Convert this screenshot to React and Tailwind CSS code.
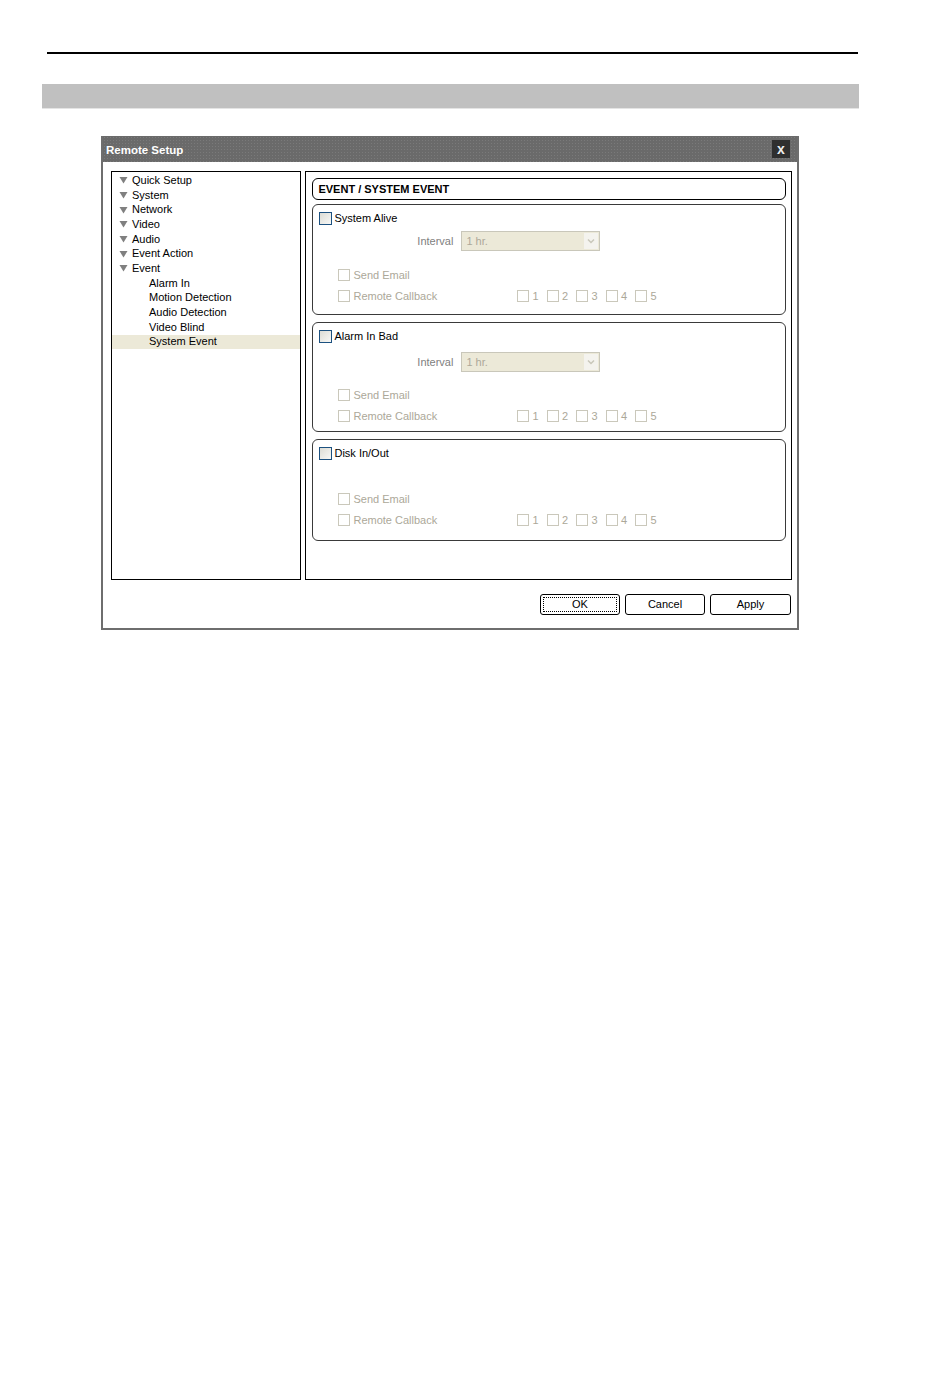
const font = "font-['Tahoma','Liberation_Sans',sans-serif]";

const treeItems = [
  { label: "Quick Setup", arrow: true },
  { label: "System", arrow: true },
  { label: "Network", arrow: true },
  { label: "Video", arrow: true },
  { label: "Audio", arrow: true },
  { label: "Event Action", arrow: true },
  { label: "Event", arrow: true },
  { label: "Alarm In" },
  { label: "Motion Detection" },
  { label: "Audio Detection" },
  { label: "Video Blind" },
  { label: "System Event", selected: true },
];

function Tri() {
  return (
    <svg width="9" height="8" viewBox="0 0 9 8" className="shrink-0">
      <path d="M0.5 1 L8.5 1 L4.5 7.5 Z" fill="#808080" />
    </svg>
  );
}

function Box({ active }) {
  return (
    <span
      className={
        active
          ? "inline-block h-[13px] w-[13px] shrink-0 border border-[#1c5180] bg-gradient-to-br from-[#dcdcd5] to-[#f8f8f6]"
          : "inline-block h-[12px] w-[12px] shrink-0 border border-[#cac8bb] bg-white"
      }
    />
  );
}

function DisabledCheck({ label }) {
  return (
    <div className="flex h-[14px] items-center gap-[3px] text-[#aca899]">
      <Box />
      <span>{label}</span>
    </div>
  );
}

function Interval() {
  return (
    <div className="flex items-center">
      <span className="w-[142px] pr-[8px] text-right text-[#808080]">Interval</span>
      <div className="flex h-[20px] w-[139px] items-center border border-[#c9c7ba] bg-[#ece9d8]">
        <span className="flex-1 pl-[4px] text-[#aca899]">1 hr.</span>
        <span className="mr-[1px] flex h-[16px] w-[14px] items-center justify-center bg-[#f4f3ee]">
          <svg width="8" height="6" viewBox="0 0 8 6">
            <path d="M1 1.5 L4 4.5 L7 1.5" stroke="#c9c7ba" strokeWidth="1.5" fill="none" />
          </svg>
        </span>
      </div>
    </div>
  );
}

function Callback() {
  return (
    <div className="flex items-center">
      <div className="w-[179px]">
        <DisabledCheck label="Remote Callback" />
      </div>
      <div className="flex items-center text-[#aca899]">
        {[1, 2, 3, 4, 5].map((n) => (
          <div key={n} className="flex w-[29.5px] items-center gap-[3px]">
            <Box />
            <span>{n}</span>
          </div>
        ))}
      </div>
    </div>
  );
}

function Group({ title, intervalTop, height, gapTop, top }) {
  return (
    <div
      className="flex flex-col rounded-[6px] border border-[#3a3a3a] pl-[6px]"
      style={{ height, marginTop: top }}
    >
      <div className="mt-[6px] flex h-[14px] items-center gap-[2px] text-black">
        <Box active />
        <span>{title}</span>
      </div>
      {intervalTop ? (
        <div style={{ marginTop: intervalTop }}>
          <Interval />
        </div>
      ) : null}
      <div className="flex flex-col gap-[7px] pl-[19px]" style={{ marginTop: gapTop }}>
        <DisabledCheck label="Send Email" />
        <Callback />
      </div>
    </div>
  );
}

export default function App() {
  return (
    <div className={`${font} relative h-[1388px] w-[950px] bg-white text-[11px] leading-none`}>
      <div className="pt-[52px]">
        <div className="ml-[47px] h-[2px] w-[811px] bg-black" />
      </div>
      <div className="ml-[42px] mt-[30px] h-[25px] w-[817px] border-b border-[#e4e4e4] bg-[#c0c0c0]" />

      <div className="ml-[101px] mt-[27px] flex h-[494px] w-[698px] flex-col border-2 border-t-0 border-[#6e6e6e] bg-white">
        <div className="flex h-[26px] items-center justify-between bg-[#6a6a6a] bg-[radial-gradient(#7a7a7a_0.8px,transparent_0.8px)] bg-[length:3px_3px] pl-[3px] pr-[7px] pt-[3px]">
          <span className="text-[11.5px] font-bold text-white">Remote Setup</span>
          <span className="-mt-[3px] flex h-[18px] w-[18px] items-center justify-center bg-[#2f2f2f] text-[14px] font-bold text-[#eeeeee]">
            x
          </span>
        </div>

        <div className="flex gap-[4px] pl-[8px] pr-[5px] pt-[9px]">
          <div className="h-[409px] w-[191px] border border-black pt-[1px]">
            {treeItems.map((it) => (
              <div
                key={it.label}
                className={`flex h-[14.7px] items-center ${it.selected ? "bg-[#ece9d8]" : ""} ${
                  it.arrow ? "pl-[7px]" : "pl-[37px]"
                }`}
              >
                {it.arrow ? <Tri /> : null}
                <span className={it.arrow ? "pl-[4px]" : ""}>{it.label}</span>
              </div>
            ))}
          </div>

          <div className="flex h-[409px] w-[488px] flex-col border border-black pl-[6px] pr-[5px] pt-[6px]">
            <div className="flex h-[22px] shrink-0 items-center rounded-[6px] border border-black pl-[5px] font-bold">
              EVENT / SYSTEM EVENT
            </div>
            <Group title="System Alive" intervalTop={6} height={111} gapTop={17} top={4} />
            <Group title="Alarm In Bad" intervalTop={9} height={110} gapTop={16} top={7} />
            <Group title="Disk In/Out" height={102} gapTop={32} top={7} />
          </div>
        </div>

        <div className="mt-[14px] flex justify-end gap-[5px] pr-[6px]">
          <button className="flex h-[21px] w-[80px] items-center justify-center rounded-[3px] border border-black p-[2px]">
            <span className="flex h-full w-full items-center justify-center border border-dotted border-black">
              OK
            </span>
          </button>
          <button className="h-[21px] w-[80px] rounded-[3px] border border-black">Cancel</button>
          <button className="h-[21px] w-[81px] rounded-[3px] border border-black">Apply</button>
        </div>
      </div>
    </div>
  );
}
